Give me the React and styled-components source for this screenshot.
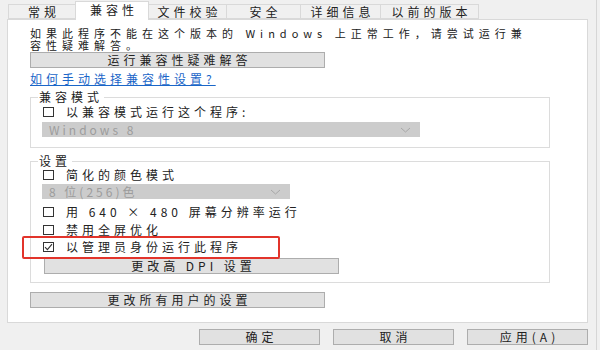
import React from "react";
import styled, { createGlobalStyle } from "styled-components";

const Global = createGlobalStyle`
  html, body { margin: 0; padding: 0; background: #f0f0f0; }
  * { box-sizing: border-box; }
`;

const Root = styled.div`
  width: 600px;
  height: 350px;
  overflow: hidden;
  background: #f0f0f0;
  box-shadow: inset -3px 0 0 #f0f0f0, inset -4px 0 0 #d6d6d6;
  display: flex;
  flex-direction: column;
  font-family: "Noto Sans CJK SC", "Noto Sans", sans-serif;
  font-size: 12px;
  line-height: 12px;
  letter-spacing: 4px;
  color: #222;
`;

const TabStrip = styled.div`
  display: flex;
  align-items: flex-end;
  height: 19px;
  padding-left: 8px;
  position: relative;
  z-index: 1;
`;

const Tab = styled.div`
  width: ${(p) => p.$w}px;
  height: ${(p) => (p.$active ? 19 : 15)}px;
  margin-bottom: ${(p) => (p.$active ? -1 : 0)}px;
  background: ${(p) => (p.$active ? "#ffffff" : "#f0f0f0")};
  border: 1px solid #d9d9d9;
  border-bottom: ${(p) => (p.$active ? "none" : "1px solid #d9d9d9")};
  margin-left: ${(p) => (p.$first ? 0 : -1)}px;
  display: flex;
  align-items: center;
  justify-content: center;
  padding-left: 4px;
  padding-bottom: ${(p) => (p.$active ? 2 : 0)}px;
  white-space: nowrap;
`;

const Panel = styled.div`
  margin-left: 7px;
  width: 581px;
  height: 304px;
  background: #ffffff;
  border: 1px solid #d9d9d9;
  padding: 7px 0 0 22px;
  display: flex;
  flex-direction: column;
  align-items: flex-start;
`;

const Desc = styled.div`
  width: 530px;
  display: flex;
  flex-direction: column;
`;

const DescLine = styled.span`
  display: block;
  height: 12px;
  font-size: 11px;
  letter-spacing: 5px;
  line-height: 12px;
  white-space: nowrap;
`;

const Button = styled.button`
  width: ${(p) => p.$w || 295}px;
  height: 16px;
  margin: ${(p) => p.$m || "0"};
  padding: 0 0 0 4px;
  background: #e1e1e1;
  border: 1px solid #adadad;
  border-radius: 0;
  font: inherit;
  letter-spacing: 4px;
  line-height: 14px;
  color: #222;
  display: flex;
  align-items: center;
  justify-content: center;
  white-space: nowrap;
`;

const Link = styled.a`
  margin-top: 5px;
  color: #1a66c8;
  text-decoration: underline;
  line-height: 12px;
  white-space: nowrap;
`;

const Group = styled.fieldset`
  margin: ${(p) => p.$mt}px 0 0 0;
  width: 520px;
  border: 1px solid #dcdcdc;
  padding: 0 0 ${(p) => p.$pb}px 12px;
  display: flex;
  flex-direction: column;
  align-items: flex-start;
`;

const Legend = styled.legend`
  margin-left: -5px;
  padding: 0 1px;
  line-height: 12px;
  height: 12px;
`;

const Row = styled.div`
  margin-top: ${(p) => p.$mt}px;
  height: 12px;
  display: flex;
  align-items: center;
  white-space: nowrap;
  position: relative;

  ${(p) =>
    p.$highlight &&
    `
    &::after {
      content: "";
      position: absolute;
      left: -21px;
      top: -5px;
      width: 254px;
      height: 19px;
      border: 2px solid #e2342b;
      border-radius: 2px;
      pointer-events: none;
    }
  `}
`;

const Box = styled.span`
  flex: 0 0 11px;
  width: 11px;
  height: 10px;
  border: 1px solid #333;
  background: #fff;
  display: flex;
  align-items: center;
  justify-content: center;
`;

const Label = styled.span`
  margin-left: 12px;
`;

const Select = styled.div`
  margin-top: ${(p) => p.$mt}px;
  margin-left: -1px;
  width: ${(p) => p.$w}px;
  height: 15px;
  background: #cccccc;
  color: #9c9c9c;
  letter-spacing: 3px;
  display: flex;
  align-items: center;
  justify-content: space-between;
  padding: 0 9px 0 7px;
  white-space: nowrap;
`;

const Footer = styled.div`
  margin-top: 6px;
  display: flex;
  justify-content: flex-end;
  gap: 13px;
  padding-right: 12px;
`;

const CheckRow = ({ checked, children, ...rest }) => (
  <Row {...rest}>
    <Box>
      {checked && (
        <svg width="9" height="8" viewBox="0 0 9 8">
          <path d="M1 4.2 L3.4 6.6 L8 1.2" fill="none" stroke="#333" strokeWidth="1.1" />
        </svg>
      )}
    </Box>
    <Label>{children}</Label>
  </Row>
);

const Chevron = () => (
  <svg width="11" height="6" viewBox="0 0 11 6">
    <path d="M1 1 L5.5 5 L10 1" fill="none" stroke="#a8a8a8" strokeWidth="1" />
  </svg>
);

const tabs = [
  { label: "常规", w: 68 },
  { label: "兼容性", w: 74, active: true },
  { label: "文件校验", w: 79 },
  { label: "安全", w: 75 },
  { label: "详细信息", w: 81 },
  { label: "以前的版本", w: 99 },
];

export default function App() {
  return (
    <Root>
      <Global />
      <TabStrip>
        {tabs.map((t, i) => (
          <Tab key={t.label} $w={t.w} $active={t.active} $first={i === 0}>
            {t.label}
          </Tab>
        ))}
      </TabStrip>
      <Panel>
        <Desc>
          <DescLine>如果此程序不能在这个版本的 Windows 上正常工作，请尝试运行兼</DescLine>
          <DescLine>容性疑难解答。</DescLine>
        </Desc>
        <Button $m="1px 0 0 0">运行兼容性疑难解答</Button>
        <Link>如何手动选择兼容性设置?</Link>

        <Group $mt={6} $pb={10}>
          <Legend>兼容模式</Legend>
          <CheckRow $mt={3}>以兼容模式运行这个程序:</CheckRow>
          <Select $mt={4} $w={378}>
            <span>Windows 8</span>
            <Chevron />
          </Select>
        </Group>

        <Group $mt={7} $pb={8}>
          <Legend>设置</Legend>
          <CheckRow $mt={2}>简化的颜色模式</CheckRow>
          <Select $mt={3} $w={248}>
            <span>8 位(256)色</span>
            <Chevron />
          </Select>
          <CheckRow $mt={7}>用 640 × 480 屏幕分辨率运行</CheckRow>
          <CheckRow $mt={6}>禁用全屏优化</CheckRow>
          <CheckRow $mt={5} $highlight checked>
            以管理员身份运行此程序
          </CheckRow>
          <Button $m="5px 0 0 1px">更改高 DPI 设置</Button>
        </Group>

        <Button $m="9px 0 0 0">更改所有用户的设置</Button>
      </Panel>
      <Footer>
        <Button $w={121}>确定</Button>
        <Button $w={121}>取消</Button>
        <Button $w={121}>应用(A)</Button>
      </Footer>
    </Root>
  );
}
